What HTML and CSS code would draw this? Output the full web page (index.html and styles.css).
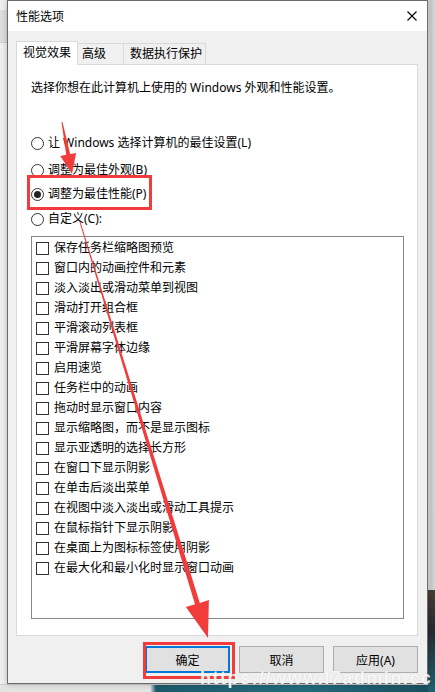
FILE: index.html
```html
<!DOCTYPE html>
<html lang="zh-CN">
<head>
    <meta charset="UTF-8">
    <title>性能选项</title>
    <link rel="stylesheet" href="styles.css">
</head>
<body>
    <div class="desk">
        <div class="desk-band"></div>
        <div class="desk-right"></div>
        <div class="desk-bottom"></div>
        <div class="desk-photo"></div>

        <div class="dialog">
            <div class="titlebar">
                <span class="title">性能选项</span>
                <svg class="close" width="10" height="10" viewBox="0 0 10 10">
                    <path d="M0.5 0.5 L9.5 9.5 M9.5 0.5 L0.5 9.5" stroke="#000" stroke-width="1.1" fill="none"/>
                </svg>
            </div>
            <div class="content">
                <div class="tabs">
                    <div class="tab active">视觉效果</div>
                    <div class="tab tab-adv">高级</div>
                    <div class="tab tab-dep">数据执行保护</div>
                </div>
                <div class="panel">
                    <p class="intro">选择你想在此计算机上使用的 Windows 外观和性能设置。</p>
                    <div class="options">
                        <label class="option"><span class="radio"></span>让 Windows 选择计算机的最佳设置(L)</label>
                        <label class="option"><span class="radio"></span>调整为最佳外观(B)</label>
                        <label class="option"><span class="radio checked"></span>调整为最佳性能(P)</label>
                        <label class="option"><span class="radio"></span>自定义(C):</label>
                    </div>
                    <div class="listbox">
                        <div class="item"><span class="check"></span>保存任务栏缩略图预览</div>
                        <div class="item"><span class="check"></span>窗口内的动画控件和元素</div>
                        <div class="item"><span class="check"></span>淡入淡出或滑动菜单到视图</div>
                        <div class="item"><span class="check"></span>滑动打开组合框</div>
                        <div class="item"><span class="check"></span>平滑滚动列表框</div>
                        <div class="item"><span class="check"></span>平滑屏幕字体边缘</div>
                        <div class="item"><span class="check"></span>启用速览</div>
                        <div class="item"><span class="check"></span>任务栏中的动画</div>
                        <div class="item"><span class="check"></span>拖动时显示窗口内容</div>
                        <div class="item"><span class="check"></span>显示缩略图，而不是显示图标</div>
                        <div class="item"><span class="check"></span>显示亚透明的选择长方形</div>
                        <div class="item"><span class="check"></span>在窗口下显示阴影</div>
                        <div class="item"><span class="check"></span>在单击后淡出菜单</div>
                        <div class="item"><span class="check"></span>在视图中淡入淡出或滑动工具提示</div>
                        <div class="item"><span class="check"></span>在鼠标指针下显示阴影</div>
                        <div class="item"><span class="check"></span>在桌面上为图标标签使用阴影</div>
                        <div class="item"><span class="check"></span>在最大化和最小化时显示窗口动画</div>
                    </div>
                </div>
                <div class="buttons">
                    <button class="btn default">确定</button>
                    <button class="btn">取消</button>
                    <button class="btn">应用(A)</button>
                </div>
            </div>
        </div>

        <!-- red annotations drawn on top of the screenshot -->
        <svg class="marks" width="435" height="692" viewBox="0 0 435 692">
            <rect x="28.5" y="176.5" width="122" height="32" fill="none" stroke="#f23c3c" stroke-width="3"/>
            <rect x="144.5" y="643.5" width="89" height="34" fill="none" stroke="#f23c3c" stroke-width="3"/>
            <polygon fill="#f23c3c" points="61.5,122 62.5,122 70.2,154 76.1,152.9 72,174 60.3,155.9 66.2,154.8"/>
            <polygon fill="#f23c3c" points="79.5,222 80.5,222 199.8,602.9 208.9,600.1 208,638 185.9,607.1 195,604.3"/>
        </svg>
        <div class="watermark">https://www.l7admin.cc</div>
    </div>
</body>
</html>
```

FILE: styles.css
```css
* {
    box-sizing: border-box;
}
body {
    margin: 0;
    font-family: "Noto Sans", "Noto Sans CJK SC", sans-serif;
    font-size: 12px;
    color: #000;
}
.desk {
    position: relative;
    width: 435px;
    height: 692px;
    overflow: hidden;
    background-color: #f0f0f0;
}
.desk-band {
    position: absolute;
    left: 0;
    top: 10px;
    width: 7px;
    height: 33px;
    background-color: #dedede;
    border-bottom: 1px solid #d0d0d0;
}
.desk-right {
    position: absolute;
    left: 428px;
    top: 0;
    width: 7px;
    height: 590px;
    background: linear-gradient(to right, #e2e2e2, #c9c9c9 40%, #d6d6d6);
}
.desk-bottom {
    position: absolute;
    left: 0;
    top: 684px;
    width: 435px;
    height: 8px;
    background: linear-gradient(to right, #e4e4e4 0, #e4e4e4 150px, #1d5a6b 156px, #236b7c 300px, #1a4f60 435px);
    border-top: 1px solid #cfcfcf;
}
.desk-photo {
    position: absolute;
    left: 428px;
    top: 590px;
    width: 7px;
    height: 102px;
    background: linear-gradient(to bottom, #4a3a36, #2a2a30 40%, #1f6070);
}
.dialog {
    position: absolute;
    left: 7px;
    top: 0;
    width: 421px;
    height: 684px;
    border: 1px solid #6b6b6b;
    background-color: #f0f0f0;
    box-shadow: 0 0 6px rgba(0, 0, 0, 0.25);
    display: flex;
    flex-direction: column;
}
.titlebar {
    height: 30px;
    background-color: #fff;
    display: flex;
    align-items: center;
    justify-content: space-between;
    padding: 0 10px 0 8px;
}
.title {
    line-height: 16px;
    padding-top: 1px;
}
.close {
    display: block;
}
.content {
    flex: 1;
    display: flex;
    flex-direction: column;
    padding: 10px 9px 10px 8px;
}
.tabs {
    display: flex;
    align-items: flex-end;
    height: 23px;
    position: relative;
    z-index: 1;
}
.tab {
    height: 21px;
    border: 1px solid #d9d9d9;
    border-bottom: none;
    display: flex;
    align-items: center;
    line-height: 16px;
    background-color: #f0f0f0;
}
.tab.active {
    width: 62px;
    height: 24px;
    margin-bottom: -1px;
    padding-left: 6px;
    padding-bottom: 1px;
    background-color: #fff;
}
.tab-adv {
    width: 47px;
    margin-left: -1px;
    padding-left: 4px;
}
.tab-dep {
    width: 83px;
    margin-left: -1px;
    padding-left: 6px;
}
.panel {
    height: 572px;
    background-color: #fff;
    border: 1px solid #d9d9d9;
    padding-left: 14px;
}
.intro {
    margin: 15px 0 0;
    line-height: 16px;
}
.options {
    margin-top: 35px;
    display: flex;
    flex-direction: column;
}
.option {
    height: 24px;
    display: flex;
    align-items: center;
    line-height: 16px;
}
.option:first-child {
    margin-bottom: 3px;
}
.option:last-child {
    margin-top: 1px;
}
.radio {
    width: 13px;
    height: 13px;
    border: 1px solid #333;
    border-radius: 50%;
    margin-right: 4px;
    display: flex;
    align-items: center;
    justify-content: center;
    background-color: #fff;
}
.radio.checked::after {
    content: "";
    width: 7px;
    height: 7px;
    border-radius: 50%;
    background-color: #222;
}
.listbox {
    margin-top: 5px;
    width: 373px;
    height: 383px;
    border: 1px solid #828790;
    padding: 1px 0 0 4px;
}
.item {
    height: 20px;
    display: flex;
    align-items: center;
    line-height: 16px;
}
.check {
    width: 13px;
    height: 13px;
    border: 1px solid #333;
    margin-right: 5px;
    background-color: #fff;
}
.buttons {
    margin-top: 10px;
    display: flex;
    justify-content: flex-end;
    gap: 9px;
    padding-right: 0;
}
.btn {
    width: 85px;
    height: 27px;
    font: inherit;
    color: #000;
    background-color: #e1e1e1;
    border: 1px solid #adadad;
    padding: 0;
}
.btn.default {
    border: 2px solid #0078d7;
}
.marks {
    position: absolute;
    left: 0;
    top: 0;
    pointer-events: none;
}
.watermark {
    position: absolute;
    left: 200px;
    top: 669px;
    font-family: "Liberation Sans", sans-serif;
    font-weight: bold;
    font-size: 18px;
    line-height: 18px;
    letter-spacing: 1.5px;
    color: rgba(255, 255, 255, 0.9);
    text-shadow: 0 0 1px rgba(120, 120, 120, 0.4);
    white-space: nowrap;
}
```
